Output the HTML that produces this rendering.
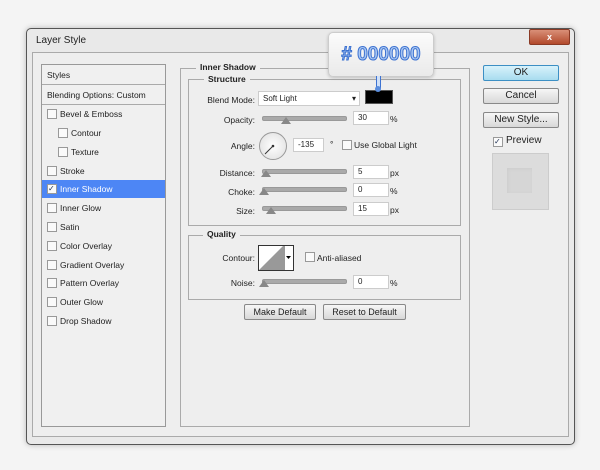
<!DOCTYPE html><html><head><style>
body{margin:0;width:600px;height:470px;background:#f4f4f4;font-family:"Liberation Sans",sans-serif;font-size:8.5px;color:#222;position:relative;overflow:hidden}
.a{position:absolute}
.win{left:26px;top:28px;width:547px;height:415px;border:1px solid #555;border-radius:5px;background:#e9e9e9;box-shadow:0 0 6px rgba(0,0,0,.25)}
.in{left:32px;top:52px;width:535px;height:383px;border:1px solid #aaa;background:#eeeeee}
.list{left:41px;top:64px;width:123px;height:361px;border:1px solid #999;background:#f0f0f0}
.row{position:absolute;left:0;width:123px;height:18px;line-height:18px}
.cb{position:absolute;width:8px;height:8px;border:1px solid #999;background:#fafafa}
.box{border:1px solid #aaa}
.lg{position:absolute;background:#eeeeee;font-weight:bold;padding:0 4px;font-size:8.5px}
.fld{position:absolute;height:12px;background:#fff;border:1px solid #ccc;line-height:12px;padding-left:4px;font-size:8px}
.sl{position:absolute;height:3px;background:#aaa;border-radius:2px;border:1px solid #999}
.th{position:absolute;width:0;height:0;border-left:5px solid transparent;border-right:5px solid transparent;border-bottom:7px solid #888}
.lab{position:absolute;text-align:right;width:80px}
.btn{position:absolute;height:14px;border:1px solid #888;border-radius:2px;background:linear-gradient(#f6f6f6,#d8d8d8);text-align:center;line-height:14px;font-size:9px}
</style></head><body>
<div class="a win"></div>
<div class="a" style="left:36px;top:35px;font-size:10px">Layer Style</div>
<div class="a" style="left:529px;top:29px;width:39px;height:14px;border-radius:2px;background:linear-gradient(#d99078,#b24a2c);color:#fff;text-align:center;font-weight:bold;font-size:9px;line-height:14px;border:1px solid #8a3a25">x</div>
<div class="a in"></div>
<div class="a list">
<div class="row" style="top:0;height:20px;line-height:20px;border-bottom:1px solid #aaa;padding-left:5px;box-sizing:border-box">Styles</div>
<div class="row" style="top:21px;height:19px;border-bottom:1px solid #aaa;padding-left:5px;box-sizing:border-box">Blending Options: Custom</div>
<div class="row" style="top:40px"><span class="cb" style="left:5px;top:4px"></span><span style="position:absolute;left:18px">Bevel &amp; Emboss</span></div>
<div class="row" style="top:59px"><span class="cb" style="left:16px;top:4px"></span><span style="position:absolute;left:29px">Contour</span></div>
<div class="row" style="top:78px"><span class="cb" style="left:16px;top:4px"></span><span style="position:absolute;left:29px">Texture</span></div>
<div class="row" style="top:97px"><span class="cb" style="left:5px;top:4px"></span><span style="position:absolute;left:18px">Stroke</span></div>
<div class="row" style="top:115px;background:#4d86f5"><span class="cb" style="left:5px;top:4px;font-size:8px;line-height:8px;color:#235">✓</span><span style="position:absolute;left:18px;color:#fff">Inner Shadow</span></div>
<div class="row" style="top:134px"><span class="cb" style="left:5px;top:4px"></span><span style="position:absolute;left:18px">Inner Glow</span></div>
<div class="row" style="top:153px"><span class="cb" style="left:5px;top:4px"></span><span style="position:absolute;left:18px">Satin</span></div>
<div class="row" style="top:172px"><span class="cb" style="left:5px;top:4px"></span><span style="position:absolute;left:18px">Color Overlay</span></div>
<div class="row" style="top:191px"><span class="cb" style="left:5px;top:4px"></span><span style="position:absolute;left:18px">Gradient Overlay</span></div>
<div class="row" style="top:209px"><span class="cb" style="left:5px;top:4px"></span><span style="position:absolute;left:18px">Pattern Overlay</span></div>
<div class="row" style="top:228px"><span class="cb" style="left:5px;top:4px"></span><span style="position:absolute;left:18px">Outer Glow</span></div>
<div class="row" style="top:247px"><span class="cb" style="left:5px;top:4px"></span><span style="position:absolute;left:18px">Drop Shadow</span></div>
</div>
<div class="a box" style="left:180px;top:68px;width:288px;height:357px"></div>
<div class="lg" style="left:196px;top:62px">Inner Shadow</div>
<div class="a box" style="left:188px;top:79px;width:271px;height:145px"></div>
<div class="lg" style="left:204px;top:74px">Structure</div>
<div class="lab" style="left:175px;top:95px">Blend Mode:</div>
<div class="fld" style="left:258px;top:91px;width:96px;height:13px;line-height:13px">Soft Light<span style="position:absolute;right:3px">▾</span></div>
<div class="a" style="left:365px;top:90px;width:26px;height:12px;background:#000;border:1px solid #555"></div>
<div class="lab" style="left:175px;top:115px">Opacity:</div>
<div class="sl" style="left:262px;top:116px;width:83px"></div><div class="th" style="left:281px;top:117px"></div>
<div class="fld" style="left:353px;top:111px;width:30px">30</div><div class="a" style="left:390px;top:114px">%</div>
<div class="lab" style="left:175px;top:141px">Angle:</div>
<div class="a" style="left:259px;top:132px;width:26px;height:26px;border-radius:50%;border:1px solid #999;background:radial-gradient(#fff,#ddd)"></div>
<svg class="a" style="left:259px;top:132px" width="28" height="28"><line x1="14" y1="14" x2="6" y2="22" stroke="#333"/><circle cx="14" cy="14" r="1.3" fill="#333"/></svg>
<div class="fld" style="left:293px;top:138px;width:25px">-135</div><div class="a" style="left:330px;top:139px">°</div>
<div class="cb" style="left:342px;top:140px"></div><div class="a" style="left:354px;top:140px">Use Global Light</div>
<div class="lab" style="left:175px;top:168px">Distance:</div>
<div class="sl" style="left:262px;top:169px;width:83px"></div><div class="th" style="left:261px;top:170px"></div>
<div class="fld" style="left:353px;top:165px;width:30px">5</div><div class="a" style="left:390px;top:168px">px</div>
<div class="lab" style="left:175px;top:187px">Choke:</div>
<div class="sl" style="left:262px;top:187px;width:83px"></div><div class="th" style="left:259px;top:188px"></div>
<div class="fld" style="left:353px;top:183px;width:30px">0</div><div class="a" style="left:390px;top:186px">%</div>
<div class="lab" style="left:175px;top:206px">Size:</div>
<div class="sl" style="left:262px;top:206px;width:83px"></div><div class="th" style="left:266px;top:207px"></div>
<div class="fld" style="left:353px;top:202px;width:30px">15</div><div class="a" style="left:390px;top:205px">px</div>
<div class="a box" style="left:188px;top:235px;width:271px;height:63px"></div>
<div class="lg" style="left:203px;top:229px">Quality</div>
<div class="lab" style="left:175px;top:253px">Contour:</div>
<div class="a" style="left:258px;top:245px;width:34px;height:24px;border:1px solid #333;background:#fff"></div>
<svg class="a" style="left:259px;top:246px" width="34" height="24"><polygon points="0,24 24,0 24,24" fill="#999"/><line x1="25" y1="0" x2="25" y2="24" stroke="#333"/><polygon points="27,10 32,10 29.5,13" fill="#000"/></svg>
<div class="cb" style="left:305px;top:252px"></div><div class="a" style="left:317px;top:253px">Anti-aliased</div>
<div class="lab" style="left:175px;top:278px">Noise:</div>
<div class="sl" style="left:262px;top:279px;width:83px"></div><div class="th" style="left:259px;top:280px"></div>
<div class="fld" style="left:353px;top:275px;width:30px">0</div><div class="a" style="left:390px;top:278px">%</div>
<div class="btn" style="left:244px;top:304px;width:70px">Make Default</div>
<div class="btn" style="left:323px;top:304px;width:81px">Reset to Default</div>
<div class="btn" style="left:483px;top:65px;width:74px;background:linear-gradient(#d8f2fb,#a8dcef);border-color:#3c8fc4;font-size:10px">OK</div>
<div class="btn" style="left:483px;top:88px;width:74px;font-size:10px">Cancel</div>
<div class="btn" style="left:483px;top:112px;width:74px;font-size:10px">New Style...</div>
<div class="cb" style="left:493px;top:137px;font-size:8px;line-height:8px;color:#235">✓</div><div class="a" style="left:506px;top:135px;font-size:10px">Preview</div>
<div class="a" style="left:492px;top:153px;width:55px;height:55px;background:#dcdcdc;border:1px solid #ccc"></div>
<div class="a" style="left:507px;top:168px;width:25px;height:25px;background:#d6d6d6;box-shadow:inset 1px 1px 3px #ccc"></div>
<div class="a" style="left:328px;top:32px;width:104px;height:43px;background:linear-gradient(#fbfbfb,#eaeaea);border:1px solid #ccc;border-radius:5px;box-shadow:0 1px 3px rgba(0,0,0,.2);text-align:center;line-height:43px;font-size:19px;font-weight:bold;color:#a9c7f2;-webkit-text-stroke:1px #3d72d1">#&nbsp;000000</div>
<div class="a" style="left:376px;top:76px;width:3px;height:12px;border:1px solid #3d72d1;border-top:none;background:#cfe0f8"></div>
<div class="a" style="left:375px;top:86px;width:6px;height:6px;border-radius:50%;background:#5b8ede"></div>
</body></html>
